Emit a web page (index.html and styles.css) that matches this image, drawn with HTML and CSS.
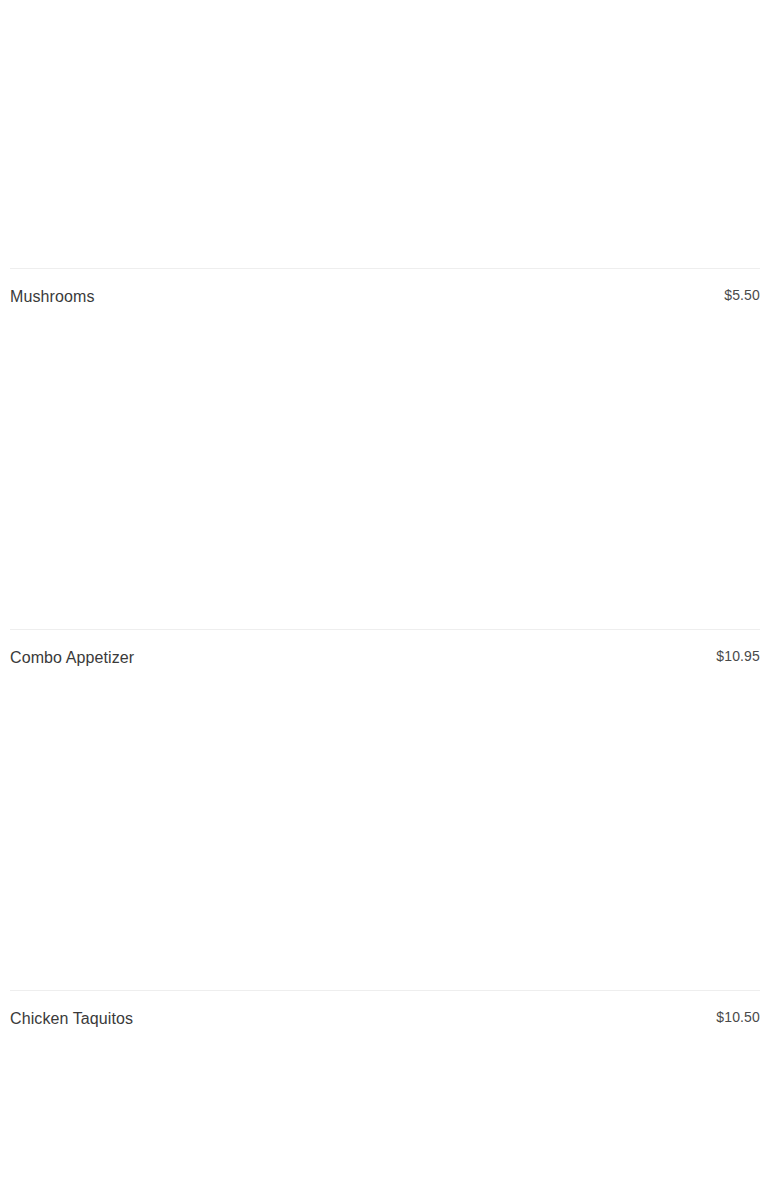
FILE: index.html
```html
<!DOCTYPE html>
<html lang="en">
<head>
    <meta charset="UTF-8">
    <meta name="viewport" content="width=device-width, initial-scale=1.0">
    <title>Appetizers</title>
    <link rel="stylesheet" href="styles.css">
</head>
<body>
    <div class="menu">
        <!-- space left by the previous item -->
        <div class="menu-top"></div>

        <div class="item">
            <div class="item-head">
                <span class="item-name">Mushrooms</span>
                <span class="item-price">$5.50</span>
            </div>
            <div class="item-body"></div>
        </div>

        <div class="item">
            <div class="item-head">
                <span class="item-name">Combo Appetizer</span>
                <span class="item-price">$10.95</span>
            </div>
            <div class="item-body"></div>
        </div>

        <div class="item">
            <div class="item-head">
                <span class="item-name">Chicken Taquitos</span>
                <span class="item-price">$10.50</span>
            </div>
            <div class="item-body"></div>
        </div>
    </div>
</body>
</html>
```

FILE: styles.css
```css
body {
    font-family: 'Liberation Sans', Arial, sans-serif;
    background-color: #fff;
    color: #333;
    margin: 0;
    padding: 0;
}

.menu {
    padding: 0 10px;
}

.menu-top {
    height: 268px;
}

.item {
    border-top: 1px solid #eee;
    padding-top: 18px;
}

.item-head {
    display: flex;
    justify-content: space-between;
    align-items: flex-start;
}

.item-name {
    margin-top: 1px;
    font-size: 16px;
    line-height: 18px;
    letter-spacing: 0.1px;
    color: #3a3a3a;
}

.item-price {
    font-size: 14px;
    line-height: 16px;
    letter-spacing: 0.15px;
    color: #4a4a4a;
}

.item-body {
    height: 323px;
}
```
